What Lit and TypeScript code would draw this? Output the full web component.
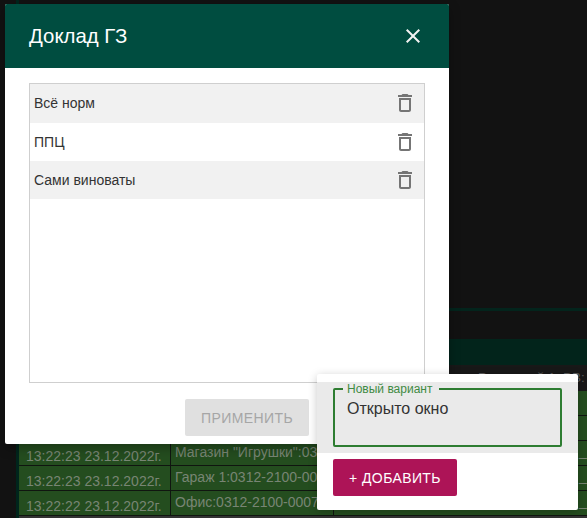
import { LitElement, html, css, svg } from "lit";
import { customElement } from "lit/decorators.js";

const trash = svg`<path d="M6 19c0 1.1.9 2 2 2h8c1.1 0 2-.9 2-2V7H6v12zM8 9h8v10H8V9zm7.5-5l-1-1h-5l-1 1H5v2h14V4z"/>`;
const close = svg`<path d="M19 6.41L17.59 5 12 10.59 6.41 5 5 6.41 10.59 12 5 17.59 6.41 19 12 13.41 17.59 19 19 17.59 13.41 12z"/>`;

const rows = [
  ["", "", ""],
  ["", "", ""],
  ["13:22:23 23.12.2022г.", 'Магазин "Игрушки":0312-2100-0007', "_"],
  ["13:22:23 23.12.2022г.", "Гараж 1:0312-2100-0007", "_"],
  ["13:22:22 23.12.2022г.", "Офис:0312-2100-0007", "_"],
];
const options = ["Всё норм", "ППЦ", "Сами виноваты"];

@customElement("app-root")
export class AppRoot extends LitElement {
  static styles = css`
    :host {
      display: block;
      font-family: "Liberation Sans", Arial, sans-serif;
    }
    .stage {
      position: relative;
      width: 587px;
      height: 518px;
      overflow: hidden;
      background: #121212;
      display: flex;
    }
    .strip {
      width: 3px;
      margin-left: 16px;
      background: #00251c;
      flex: none;
    }
    .main {
      flex: 1;
      min-width: 0;
      display: flex;
      flex-direction: column;
      padding-top: 308px;
    }
    .main > * {
      flex: none;
    }
    .line {
      height: 3px;
      background: #03241c;
    }
    .band {
      height: 26px;
      margin-top: 28px;
      background: #02241b;
    }
    .head {
      height: 26px;
      background: #181818;
      color: #5c5c5c;
      font-size: 13.5px;
      line-height: 26px;
      padding-left: 459px;
      white-space: nowrap;
    }
    .row {
      display: grid;
      grid-template-columns: 152px 163px 1fr;
      height: 24px;
      border-bottom: 1px solid #101510;
      background: #244d1f;
      color: #788574;
      font-size: 14px;
      white-space: nowrap;
    }
    .row > div {
      border-right: 1px solid #101510;
    }
    .time {
      padding: 7px 0 0 7px;
      line-height: 17px;
    }
    .name {
      padding: 3px 0 0 4px;
      line-height: 17px;
    }
    .tail {
      padding-left: 245px;
      line-height: 20px;
      border-right: none !important;
    }
    .last {
      height: 4px;
      background: #333;
    }
    .modal {
      position: absolute;
      left: 5px;
      top: 4px;
      width: 444px;
      height: 440px;
      background: #fff;
      border-radius: 2px;
      display: flex;
      flex-direction: column;
      box-shadow: 0 4px 12px rgba(0, 0, 0, 0.3);
    }
    .title {
      height: 64px;
      flex: none;
      background: #004d40;
      color: #fff;
      display: flex;
      align-items: center;
      justify-content: space-between;
      padding: 0 24px;
      font-size: 20.4px;
      border-radius: 2px 2px 0 0;
    }
    .title svg {
      width: 24px;
      height: 24px;
      fill: #f2f2f2;
      display: block;
    }
    .list {
      margin: 15px 24px 0;
      height: 300px;
      box-sizing: border-box;
      border: 1px solid #cfcfcf;
      flex: none;
    }
    .opt {
      height: 38px;
      display: flex;
      align-items: center;
      justify-content: space-between;
      padding: 0 7px 0 4px;
      font-size: 14px;
      color: #333;
    }
    .opt:first-child {
      padding-bottom: 1px;
    }
    .opt:nth-child(odd) {
      background: #f1f1f1;
    }
    .opt svg {
      width: 24px;
      height: 24px;
      fill: #757575;
      display: block;
    }
    .foot {
      display: flex;
      justify-content: flex-end;
      padding: 16px 140px 0 0;
    }
    .btn {
      height: 37px;
      width: 124px;
      box-sizing: border-box;
      border-radius: 2px;
      display: flex;
      align-items: center;
      justify-content: center;
      font-size: 14px;
      letter-spacing: 0.4px;
    }
    .apply {
      background: #e0e0e0;
      color: #a6a6a6;
    }
    .pop {
      position: absolute;
      left: 317px;
      top: 374px;
      width: 261px;
      height: 136px;
      background: #fff;
      border-radius: 2px;
      box-shadow: 0 2px 10px rgba(0, 0, 0, 0.22);
    }
    .field {
      margin-top: 8px;
      background: #eaeaea;
      padding: 0 16px 6px;
    }
    fieldset {
      margin: 0;
      height: 65px;
      box-sizing: border-box;
      border: 2px solid #2e7d32;
      border-radius: 2px;
      padding: 3px 12px 0;
    }
    legend {
      margin-left: -4px;
      padding: 0 7px 0 4px;
      font-size: 12px;
      line-height: 14px;
      color: #3f8b43;
    }
    .value {
      font-size: 16px;
      line-height: 20px;
      color: #333;
    }
    .add {
      margin: 6px 0 0 16px;
      background: #ad1457;
      color: #fff;
    }
  `;

  render() {
    return html`
      <div class="stage">
        <div class="strip"></div>
        <div class="main">
          <div class="line"></div>
          <div class="band"></div>
          <div class="head">Режимный 1: ВВ:</div>
          ${rows.map(
            ([t, n, x]) => html`<div class="row">
              <div class="time">${t}</div>
              <div class="name">${n}</div>
              <div class="tail">${x}</div>
            </div>`
          )}
          <div class="last"></div>
        </div>
        <div class="modal">
          <div class="title">
            <span>Доклад ГЗ</span>
            <svg viewBox="0 0 24 24">${close}</svg>
          </div>
          <div class="list">
            ${options.map(
              (o) => html`<div class="opt">
                <span>${o}</span>
                <svg viewBox="0 0 24 24">${trash}</svg>
              </div>`
            )}
          </div>
          <div class="foot"><div class="btn apply">ПРИМЕНИТЬ</div></div>
        </div>
        <div class="pop">
          <div class="field">
            <fieldset>
              <legend>Новый вариант</legend>
              <div class="value">Открыто окно</div>
            </fieldset>
          </div>
          <div class="btn add">+ ДОБАВИТЬ</div>
        </div>
      </div>
    `;
  }
}
